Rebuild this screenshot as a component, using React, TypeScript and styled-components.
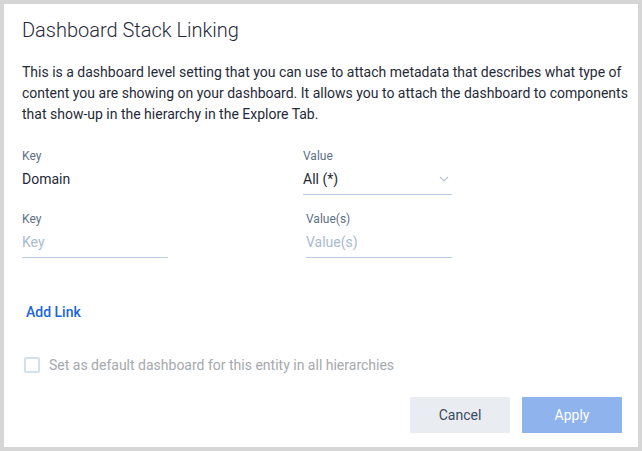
import React from "react";
import styled, { createGlobalStyle } from "styled-components";

const Global = createGlobalStyle`
  html, body { margin: 0; padding: 0; background: #d6d6d6; }
  body { font-family: Roboto, "Liberation Sans", sans-serif; }
  * { box-sizing: border-box; }
`;

const Frame = styled.div`
  padding: 4px;
  width: 642px;
  height: 451px;
`;

const Dialog = styled.div`
  background: #ffffff;
  width: 634px;
  height: 443px;
  padding: 12px 16px 14px 18px;
  display: flex;
  flex-direction: column;
`;

const Title = styled.h1`
  margin: 0;
  font-size: 20px;
  font-weight: 300;
  color: #1f2a3a;
  line-height: 28px;
`;

const Description = styled.p`
  margin: 18px -14px 0 0;
  font-size: 14px;
  line-height: 21px;
  color: #1f2a3a;
  white-space: nowrap;
`;

const FieldGrid = styled.div`
  margin-top: 23px;
  display: grid;
  grid-template-columns: 281px 149px;
  row-gap: 16px;
`;

const Field = styled.div<{ $offset?: number; $width: number }>`
  display: flex;
  flex-direction: column;
  margin-left: ${(p) => p.$offset ?? 0}px;
  width: ${(p) => p.$width}px;
`;

const Label = styled.span`
  font-size: 12px;
  line-height: 16px;
  color: #5b6f86;
`;

const ValueRow = styled.div<{ $underline?: boolean }>`
  display: flex;
  align-items: center;
  justify-content: space-between;
  height: 31px;
  font-size: 14px;
  color: #1f2a3a;
  border-bottom: ${(p) => (p.$underline ? "1px solid #b9cbe0" : "1px solid transparent")};
`;

const Placeholder = styled.span`
  color: #a9bbd0;
`;

const Chevron = styled.svg`
  width: 10px;
  height: 6px;
  margin-right: 3px;
`;

const AddLink = styled.a`
  margin-top: 44px;
  margin-left: 4px;
  font-size: 14px;
  font-weight: 500;
  color: #1b66d8;
  text-decoration: none;
  line-height: 20px;
`;

const CheckRow = styled.label`
  margin-top: 35px;
  margin-left: 2px;
  display: flex;
  align-items: center;
  gap: 9px;
  font-size: 14px;
  color: #a5a9ae;
`;

const Box = styled.span`
  width: 16px;
  height: 16px;
  border: 2px solid #d3dfec;
  border-radius: 2px;
`;

const Footer = styled.div`
  margin-top: auto;
  display: flex;
  justify-content: flex-end;
  gap: 12px;
`;

const Button = styled.button<{ $primary?: boolean }>`
  width: 100px;
  height: 36px;
  border: none;
  font-family: inherit;
  font-size: 14px;
  background: ${(p) => (p.$primary ? "#8fb3ec" : "#e9edf1")};
  color: ${(p) => (p.$primary ? "#ffffff" : "#3a4a5e")};
`;

export default function App() {
  return (
    <Frame>
      <Global />
      <Dialog>
        <Title>Dashboard Stack Linking</Title>
        <Description>
          This is a dashboard level setting that you can use to attach metadata that describes what type of
          <br />
          content you are showing on your dashboard. It allows you to attach the dashboard to components
          <br />
          that show-up in the hierarchy in the Explore Tab.
        </Description>
        <FieldGrid>
          <Field $width={146}>
            <Label>Key</Label>
            <ValueRow>Domain</ValueRow>
          </Field>
          <Field $width={149}>
            <Label>Value</Label>
            <ValueRow $underline>
              All (*)
              <Chevron viewBox="0 0 10 6">
                <path d="M1 1l4 4 4-4" fill="none" stroke="#b9c4d0" strokeWidth="1.2" />
              </Chevron>
            </ValueRow>
          </Field>
          <Field $width={146}>
            <Label>Key</Label>
            <ValueRow $underline>
              <Placeholder>Key</Placeholder>
            </ValueRow>
          </Field>
          <Field $width={146} $offset={3}>
            <Label>Value(s)</Label>
            <ValueRow $underline>
              <Placeholder>Value(s)</Placeholder>
            </ValueRow>
          </Field>
        </FieldGrid>
        <AddLink href="#">Add Link</AddLink>
        <CheckRow>
          <Box />
          Set as default dashboard for this entity in all hierarchies
        </CheckRow>
        <Footer>
          <Button>Cancel</Button>
          <Button $primary>Apply</Button>
        </Footer>
      </Dialog>
    </Frame>
  );
}
